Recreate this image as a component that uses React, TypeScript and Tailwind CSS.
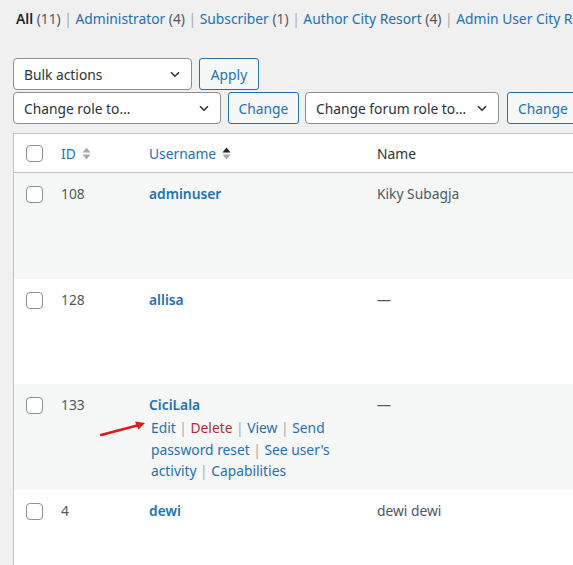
import React from 'react';

type User = {
  id: number;
  username: string;
  name: string;
  striped: boolean;
  actions?: boolean;
};

const users: User[] = [
  { id: 108, username: 'adminuser', name: 'Kiky Subagja', striped: true },
  { id: 128, username: 'allisa', name: '—', striped: false },
  { id: 133, username: 'CiciLala', name: '—', striped: true, actions: true },
  { id: 4, username: 'dewi', name: 'dewi dewi', striped: false },
];

function Chevron() {
  return (
    <svg width="10" height="7" viewBox="0 0 10 7" className="shrink-0">
      <path d="M1 1.2 L5 5.2 L9 1.2" fill="none" stroke="#2c3338" strokeWidth="1.6" />
    </svg>
  );
}

function Select({ label, width }: { label: string; width: string }) {
  return (
    <div
      className={`${width} h-[32px] flex items-center justify-between pl-[10px] pr-[11px] bg-white border border-[#8c8f94] rounded-[4px] text-[#2c3338] whitespace-nowrap`}
    >
      <span>{label}</span>
      <Chevron />
    </div>
  );
}

function Button({ label, width }: { label: string; width: string }) {
  return (
    <div
      className={`${width} h-[32px] flex items-center justify-center bg-[#f6f7f7] border border-[#2271b1] rounded-[3px] text-[#2271b1] whitespace-nowrap shrink-0`}
    >
      {label}
    </div>
  );
}

function Checkbox() {
  return <div className="w-[17px] h-[17px] bg-white border border-[#8c8f94] rounded-[4px] shrink-0" />;
}

function SortArrows({ active }: { active?: boolean }) {
  return (
    <svg width="9" height="13" viewBox="0 0 9 13" className="ml-[6px]">
      <path d="M0.5 5.5 L4.5 0.5 L8.5 5.5 Z" fill={active ? '#1d2327' : '#a7aaad'} />
      <path d="M0.5 7.5 L4.5 12.5 L8.5 7.5 Z" fill="#a7aaad" />
    </svg>
  );
}

function Bar() {
  return <span className="text-[#a7aaad]">|</span>;
}

export default function App() {
  return (
    <div className="w-[573px] h-[565px] overflow-hidden bg-[#f0f0f1] font-['Noto_Sans',sans-serif] text-[13.8px] leading-[21px] text-[#3c434a]">
      {/* role filter */}
      <div className="pt-[8px] pl-[16px] whitespace-nowrap">
        <span className="font-semibold text-[#1d2327]">All</span>{' '}
        <span className="text-[#50575e]">(11)</span> <Bar />{' '}
        <span className="text-[#2271b1]">Administrator</span>{' '}
        <span className="text-[#50575e]">(4)</span> <Bar />{' '}
        <span className="text-[#2271b1]">Subscriber</span>{' '}
        <span className="text-[#50575e]">(1)</span> <Bar />{' '}
        <span className="text-[#2271b1]">Author City Resort</span>{' '}
        <span className="text-[#50575e]">(4)</span> <Bar />{' '}
        <span className="text-[#2271b1]">Admin User City Resort</span>
      </div>

      {/* table nav */}
      <div className="mt-[29px] pl-[13px] flex flex-col gap-[2px]">
        <div className="flex gap-[7px]">
          <Select label="Bulk actions" width="w-[179px]" />
          <Button label="Apply" width="w-[60px]" />
        </div>
        <div className="flex items-center">
          <Select label="Change role to…" width="w-[208px] shrink-0" />
          <div className="ml-[7px]">
            <Button label="Change" width="w-[71px]" />
          </div>
          <div className="ml-[6px]">
            <Select label="Change forum role to…" width="w-[194px] shrink-0" />
          </div>
          <div className="ml-[8px]">
            <Button label="Change" width="w-[72px]" />
          </div>
        </div>
      </div>

      {/* users table */}
      <div className="relative mt-[9px] ml-[13px] w-[700px] bg-white border border-[#c3c4c7]">
        <div className="flex items-center h-[39px] border-b border-[#c3c4c7] text-[#2c3338]">
          <div className="w-[47px] pl-[12px]">
            <Checkbox />
          </div>
          <div className="w-[88px] flex items-center text-[#2271b1]">
            ID
            <SortArrows />
          </div>
          <div className="w-[228px] flex items-center text-[#2271b1]">
            Username
            <SortArrows active />
          </div>
          <div className="flex-1">Name</div>
        </div>

        {users.map(u => (
          <div
            key={u.id}
            className={`relative flex h-[105.5px] pt-[10px] ${u.striped ? 'bg-[#f6f7f7]' : 'bg-white'}`}
          >
            <div className="w-[47px] pl-[12px] pt-[3px]">
              <Checkbox />
            </div>
            <div className="w-[88px] text-[#50575e]">{u.id}</div>
            <div className="w-[228px] pr-[14px]">
              <div className="font-semibold text-[#2271b1]">{u.username}</div>
              {u.actions && (
                <div className="mt-[2px] leading-[21.5px] pl-[2px] text-[#2271b1]">
                  Edit <Bar /> <span className="text-[#b32d2e]">Delete</span> <Bar /> View <Bar /> Send
                  password reset <Bar /> See user's activity <Bar /> Capabilities
                </div>
              )}
            </div>
            <div className="flex-1 text-[#50575e]">{u.name}</div>

            {u.actions && (
              <svg
                width="52"
                height="20"
                viewBox="0 0 52 20"
                className="absolute left-[85px] top-[34px]"
              >
                <path d="M2 17 L40 7" stroke="#e0191b" strokeWidth="2.4" strokeLinecap="round" />
                <path d="M46 5 L36 3.5 L39.5 11.5 Z" fill="#e0191b" />
              </svg>
            )}
          </div>
        ))}
      </div>
    </div>
  );
}
